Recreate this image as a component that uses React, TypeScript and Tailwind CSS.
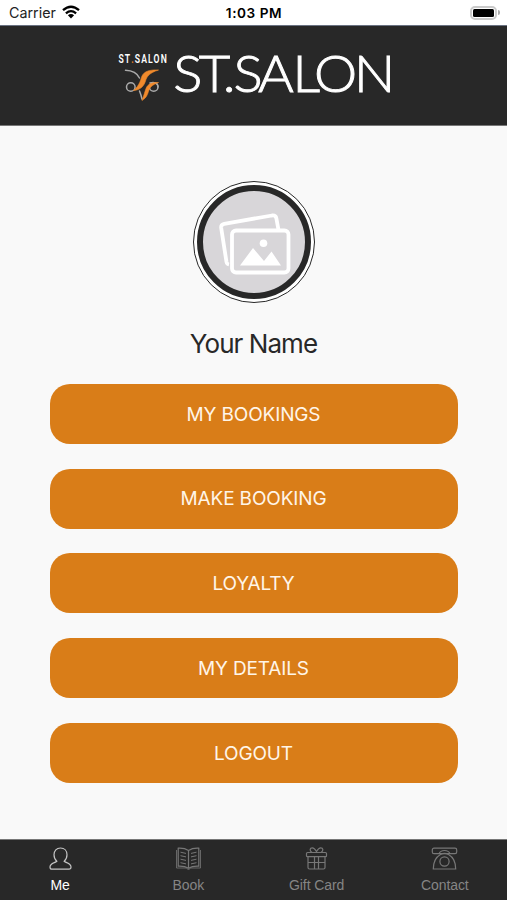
import React from "react";

interface Tab {
  label: string;
  icon: React.ReactNode;
}

const actions = [
  "MY BOOKINGS",
  "MAKE BOOKING",
  "LOYALTY",
  "MY DETAILS",
  "LOGOUT",
];

const tabs: Tab[] = [
  {
    label: "Me",
    icon: (
      <path d="M9.800 14.300C7.800 12.500 7 10.300 7 7.800 7 3.700 9.600 1 13.500 1S20 3.700 20 7.800c0 2.500-.8 4.700-2.800 6.500 1.800 1.700 6.800 1.700 6.800 5.700 0 1.700-.6 2.200-2 2.200H5c-1.400 0-2-.5-2-2.200 0-4 5-4 6.800-5.700z" />
    ),
  },
  {
    label: "Book",
    icon: (
      <>
        <path d="M13.500 3.500C10.500 1.500 6.500 1 3.200 1.200v18c3.500-.2 7.500.3 10.300 2 2.800-1.700 6.800-2.200 10.300-2v-18C20.500 1 16.500 1.500 13.500 3.500v18" />
        <path d="M1.500 3v18h9.700c.8 0 1 1.500 2.300 1.500s1.500-1.500 2.300-1.500h9.700V3" strokeWidth="0.8" />
        <path d="M5.500 5.200l5.500 1.200M5.500 8.700l5.500 1.200M5.500 12.200l5.500 1.200M5.500 15.700l5.500 1.200M21.500 5.200l-5.500 1.200M21.500 8.700l-5.500 1.200M21.500 12.200l-5.500 1.200M21.500 15.700l-5.500 1.200" strokeWidth="1" />
      </>
    ),
  },
  {
    label: "Gift Card",
    icon: (
      <>
        <rect x="3.500" y="5.500" width="20" height="4.200" rx="1" />
        <path d="M5 9.700v10.800A1.500 1.500 0 0 0 6.500 22h14a1.500 1.500 0 0 0 1.500-1.500V9.700M5 15.500h17M11.500 9.700V22M15.500 9.700V22" />
        <path d="M9 5.500C6 3.500 7 .8 9.300.8c2 0 3 1.700 4.200 3.700 1.200-2 2.200-3.700 4.200-3.700C20 .8 21 3.500 18 5.500" />
      </>
    ),
  },
  {
    label: "Contact",
    icon: (
      <>
        <rect x="1.300" y="1.200" width="24.400" height="5.500" rx="1.700" />
        <path d="M8 6.700c1-2.400 3-3.200 5.500-3.200s4.500.8 5.500 3.200" />
        <path d="M9.500 7.500C5 10 2.300 15 2.300 22h22.400c0-7-2.700-12-7.200-14.500M9.500 7.500c2.500-1.500 5.500-1.500 8 0" />
        <circle cx="13.500" cy="14.500" r="4.600" />
      </>
    ),
  },
];

const StatusBar: React.FC = () => (
  <div className="grid h-[26px] grid-cols-3 items-center border-b border-gray-500 bg-white px-[7px] pt-[2px] leading-none text-black">
    <div className="flex items-center gap-[6px] pl-[2px]">
      <span className="text-[14.3px] text-[#222]">Carrier</span>
      <svg width="18" height="14" viewBox="0 0 18 14" fill="none" stroke="black" strokeWidth="2.300" className="-mt-[2px]">
        <path d="M1 5.200Q9-1.800 17 5.200M3.900 8.300Q9 4 14.100 8.300" />
        <path d="M9 13.400L5.900 10.300Q9 7.800 12.100 10.300z" fill="black" stroke="none" />
      </svg>
    </div>
    <span className="pl-px text-center text-[13.6px] font-semibold tracking-[0.55px]">1:03 PM</span>
    <div className="flex items-center justify-end gap-px">
      <div className="-mt-[2px] h-[14px] w-[27px] rounded-[5px] border-2 border-[#cacaca] p-px">
        <div className="h-full rounded-[1.5px] bg-black" />
      </div>
      <div className="-mt-[2px] h-[5px] w-[2px] rounded-r-full bg-[#aaa]" />
    </div>
  </div>
);

const Header: React.FC = () => (
  <header className="flex h-[100px] items-center justify-center border-b border-[#777] bg-[#282828]">
    <svg width="507" height="99" viewBox="0 26 507 99">
      <g transform="translate(118.500 63) scale(.72 1)" className="font-['Roboto',sans-serif]">
        <text fill="white" fontSize="12" fontWeight="600" textLength="67" lengthAdjust="spacing">
          ST<tspan fill="#ee8123">.</tspan>SALON
        </text>
      </g>
      <g fill="none" strokeLinecap="round" stroke="#aaa" strokeWidth="1.500">
        <path d="M125.500 70.200c6.500.2 11.500 2.300 14 7.800M150 83c4-1.500 8 0 8 4" />
        <circle cx="130.800" cy="87" r="4.300" />
        <circle cx="153.700" cy="87" r="4.300" />
        <path d="M139.500 91c1 2.500 1.800 4.500 2.500 8" />
      </g>
      <g fill="#f08a2c" stroke="#f08a2c" strokeWidth="0.600" strokeLinejoin="round">
        <path d="M158.500 70c-9-.5-14.500 1.500-16.500 6-1.600 4-2 9-8.500 14.500 7-.5 10.500-4.500 12-9.500 1.300-4.500 4-8.200 13-11z" />
        <path d="M158.500 82.500c-7.500-.3-11 2-12.500 6-1.200 3.500-2 6.500-4 12 5-3 5.500-6.500 7-10.500 1.300-3.300 4-5.500 9.500-7.500z" />
      </g>
      <g transform="scale(1.060 1)" fill="white" stroke="white" strokeWidth="0.900" fontSize="51.500" fontWeight="300" className="font-['Lato',sans-serif]">
        <text y="92" x="163.500 187.500 210.200 220.300 243.500 276 296.300 334">
          ST.SALON
        </text>
      </g>
    </svg>
  </header>
);

const Avatar: React.FC = () => (
  <div className="size-[122px] rounded-full border border-[#282828] bg-white p-[3px]">
    <div className="size-full rounded-full border-[6px] border-[#282828] bg-[#d8d6d9]">
      <svg width="102" height="102" viewBox="0 0 102 102" fill="none" stroke="white" strokeWidth="3.800" strokeLinejoin="round">
        <path d="M26 73.500c-1.500-.3-2.200-1-2.500-2.500L18.200 37c-.3-2.500.8-3.800 3-4.200L69 24.500c2.500-.3 4 .7 4.400 3L75.500 39" />
        <rect x="29" y="39.500" width="56.500" height="42" rx="4" />
        <circle cx="60.500" cy="52.300" r="3.800" fill="white" stroke="none" />
        <path d="M37 74.500L50 57l11 13 7.500-9.500L78 74.500z" fill="white" stroke="none" />
      </svg>
    </div>
  </div>
);

const TabBar: React.FC = () => (
  <nav className="h-[61px] overflow-hidden border-t border-[#777] bg-[#282828]">
    <div className="-ml-[4px] grid w-[513px] grid-cols-4 pt-[7px]">
      {tabs.map((tab, i) => (
        <button
          key={tab.label}
          className={`flex flex-col items-center ${i === 0 ? "text-white" : "text-[#858585]"}`}
        >
          <svg width="27" height="24" viewBox="0 0 27 24" fill="none" stroke={i === 0 ? "#c4c4c4" : "#777"} strokeWidth="1.200">
            {tab.icon}
          </svg>
          <span className="mt-[5px] font-['Liberation_Sans',sans-serif] text-[14px] leading-[18px] tracking-[-0.1px]">
            {tab.label}
          </span>
        </button>
      ))}
    </div>
  </nav>
);

export default function App() {
  return (
    <div className="flex h-[900px] w-[507px] flex-col overflow-hidden bg-[#f9f9f9] font-['Inter',sans-serif]">
      <StatusBar />
      <Header />
      <main className="flex flex-1 flex-col items-center pt-[55px]">
        <Avatar />
        <h1 className="mt-[22px] text-[26px] leading-[38px] tracking-[-0.95px] text-[#282828]">
          Your Name
        </h1>
        <div className="mt-[21px] flex w-[408px] flex-col gap-[24.7px]">
          {actions.map((label) => (
            <button
              key={label}
              className="h-[60px] rounded-[20px] bg-[#d97d18] pt-[2px] text-[19px] tracking-[-0.15px] text-[#fff5e8]"
            >
              {label}
            </button>
          ))}
        </div>
      </main>
      <TabBar />
    </div>
  );
}
